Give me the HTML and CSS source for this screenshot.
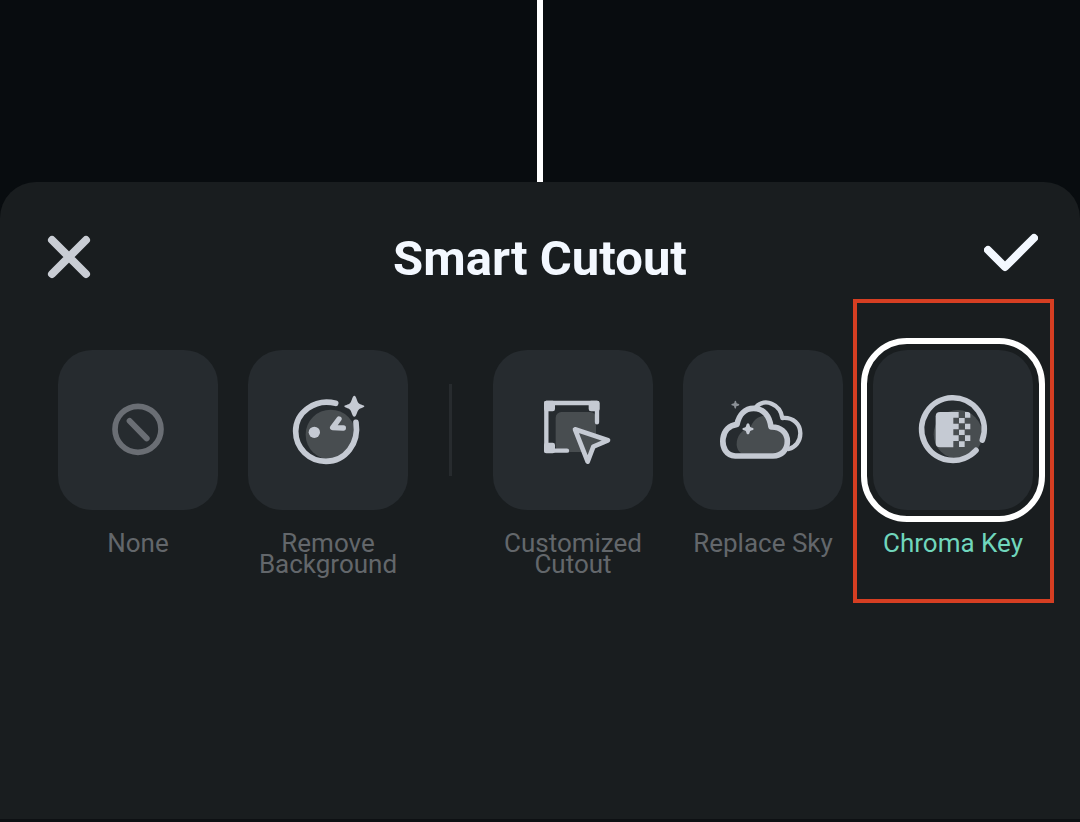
FILE: index.html
```html
<!DOCTYPE html>
<html lang="en">
<head>
<meta charset="utf-8">
<meta name="viewport" content="width=device-width, initial-scale=1">
<title>Smart Cutout</title>
<link rel="stylesheet" href="styles.css">
</head>
<body>
<div class="preview"><div class="playhead"></div></div>
<main class="sheet">
  <header class="sheet-header">
    <button class="icon-button" type="button" aria-label="Close">
      <svg class="close-icon" viewBox="0 0 54 44"><path d="M10 5 44 39M44 5 10 39"/></svg>
    </button>
    <h1 class="title">Smart Cutout</h1>
    <button class="icon-button" type="button" aria-label="Apply">
      <svg class="check-icon" viewBox="0 0 54 40"><path d="M4 17 21 34 50 5"/></svg>
    </button>
  </header>
  <div class="options">
    <button class="option" type="button">
      <span class="tile">
        <svg class="icon icon-muted" viewBox="-6 0 300 300">
          <circle cx="144" cy="148" r="69" stroke-width="17"/>
          <path d="M119 123 170 175" stroke-width="18"/>
        </svg>
      </span>
      <span class="label">None</span>
    </button>
    <button class="option" type="button">
      <span class="tile">
        <svg class="icon" viewBox="0 0 300 300">
          <circle class="shade" cx="158" cy="164" r="75"/>
          <path d="M173 70C111 54 53 97 53 154c0 51 41 90 91 90 58 0 100-54 90-117" stroke-width="17"/>
          <circle class="solid" cx="109" cy="157" r="17"/>
          <path d="M183 117 164 143 196 144" stroke-width="16"/>
          <path class="solid" d="M229 47c6 0 8 18 13 23s17 5 17 9-12 5-17 10-7 21-13 21-8-16-13-21-17-6-17-10 12-4 17-9 7-23 13-23Z"/>
        </svg>
      </span>
      <span class="label">Remove Background</span>
    </button>
    <span class="divider"></span>
    <button class="option" type="button">
      <span class="tile">
        <svg class="icon" viewBox="-6 0 300 300">
          <rect class="shade" x="92" y="96" width="121" height="120" rx="17"/>
          <path d="M216 127V69H64V212H126" stroke-width="13"/>
          <rect class="solid" x="57" y="62" width="33" height="32" rx="7"/>
          <rect class="solid" x="191" y="62" width="33" height="32" rx="7"/>
          <rect class="solid" x="57" y="188" width="33" height="32" rx="7"/>
          <path class="cursor" d="M150 148 249 181 205 200 188 245Z" stroke-width="14"/>
        </svg>
      </span>
      <span class="label">Customized Cutout</span>
    </button>
    <button class="option" type="button">
      <span class="tile">
        <svg class="icon" viewBox="3 0 300 300">
          <path d="M133 80C145 66 164 64 179 71c17 7 29 22 32 43 33-3 54 19 54 46 0 25-15 42-35 47" stroke-width="13"/>
          <path class="cloud" d="M70 228C43 226 30 204 33 176c3-25 19-40 42-43 6-29 24-48 50-48 30 0 48 24 52 56 28-1 49 15 49 43 0 27-18 44-43 44Z"/>
          <path class="shade" d="M74 196c-1-28 15-49 40-50 9-27 27-40 51-39 4 11 6 26 7 40 29-1 47 12 47 37 0 20-12 35-35 35H87c-8-5-12-13-13-23Z"/>
          <path d="M70 228C43 226 30 204 33 176c3-25 19-40 42-43 6-29 24-48 50-48 30 0 48 24 52 56 28-1 49 15 49 43 0 27-18 44-43 44Z" stroke-width="17"/>
          <path class="solid" d="M108 130c5 0 5 9 7 11s10 2 10 6-8 4-10 6-2 10-7 10-5-8-7-10-10-2-10-6 8-4 10-6 2-11 7-11Z"/>
          <path class="star-dim" d="M70 62c3 0 3 6 4 8s8 1 8 4-6 3-8 4-1 8-4 8-3-6-4-8-8-1-8-4 6-3 8-4 1-8 4-8Z"/>
        </svg>
      </span>
      <span class="label">Replace Sky</span>
    </button>
    <button class="option option-selected" type="button" aria-pressed="true">
      <span class="tile">
        <svg class="icon" viewBox="0 0 300 300">
          <circle class="shade" cx="165" cy="163" r="73"/>
          <path d="M238 180A94 94 0 1 0 219 211" stroke-width="17"/>
          <path class="solid" d="M151 96h-40q-13 0-13 13v80q0 13 13 13h40Z"/>
          <path class="solid" d="M150 96h17v17h-17zM186 96h8q8 0 8 8v9h-16zM168 114h17v16h-17zM150 131h17v17h-17zM186 131h16v17h-16zM168 149h17v16h-17zM150 166h17v17h-17zM186 166h16v17h-16zM168 184h17v17h-17z"/>
        </svg>
      </span>
      <span class="label">Chroma Key</span>
      <span class="highlight"></span>
    </button>
  </div>
</main>
</body>
</html>
```
FILE: styles.css
```css
* {
  box-sizing: border-box;
}

body {
  display: flex;
  flex-direction: column;
  min-height: 100vh;
  margin: 0;
  background: #080c0f;
  font-family: Roboto, "Liberation Sans", sans-serif;
}

button {
  padding: 0;
  border: 0;
  background: none;
  color: inherit;
  font: inherit;
  cursor: pointer;
}

svg {
  display: block;
  fill: none;
  stroke: currentColor;
  stroke-linecap: round;
  stroke-linejoin: round;
}

.preview {
  display: flex;
  justify-content: center;
  height: 182px;
}

.playhead {
  width: 6px;
  background: #fff;
}

.sheet {
  flex: 1;
  border-bottom: 3px solid #0d1013;
  border-radius: 36px 36px 0 0;
  background: #191d1f;
}

.sheet-header {
  display: grid;
  grid-template-columns: 1fr auto 1fr;
  align-items: center;
  height: 168px;
  padding: 0 42px 14px;
}

.icon-button {
  justify-self: start;
  color: #c9cdd4;
}

.icon-button:last-child {
  justify-self: end;
  color: #f3f8ff;
}

.close-icon {
  width: 54px;
  margin-bottom: 4px;
  stroke-width: 8px;
}

.check-icon {
  width: 54px;
  margin-bottom: 12px;
  stroke-width: 8px;
}

.title {
  margin: 0;
  color: #f3f8ff;
  font-size: 49px;
  font-weight: 700;
  line-height: 56px;
}

.options {
  display: flex;
  align-items: flex-start;
  gap: 30px;
  padding: 0 47px 0 58px;
}

.option {
  position: relative;
  display: flex;
  flex: none;
  flex-direction: column;
  gap: 23px;
  width: 160px;
  color: #63676b;
}

.tile {
  display: grid;
  place-items: center;
  width: 160px;
  height: 160px;
  border-radius: 34px;
  background: #262b2f;
  color: #c5cad3;
}

.icon {
  width: 100px;
  height: 100px;
}

.icon-muted {
  color: #6a6e74;
}

.shade {
  fill: #484d50;
  stroke: none;
}

.solid {
  fill: currentColor;
  stroke: none;
}

.cursor {
  fill: #484d50;
}

.cloud {
  fill: #262b2f;
  stroke: none;
}

.star-dim {
  fill: #8b9096;
  stroke: none;
}

.label {
  width: 100%;
  font-size: 26px;
  line-height: 21px;
  text-align: center;
}

.divider {
  width: 3px;
  height: 92px;
  margin: 34px 11px 0;
  background: #272b2e;
}

.option-selected {
  color: #70d6bc;
}

.option-selected .tile {
  outline: 6px solid #fff;
  outline-offset: 6px;
}

.highlight {
  position: absolute;
  top: -51px;
  right: -21px;
  left: -20px;
  height: 304px;
  border: 4px solid #d53e22;
}
```
